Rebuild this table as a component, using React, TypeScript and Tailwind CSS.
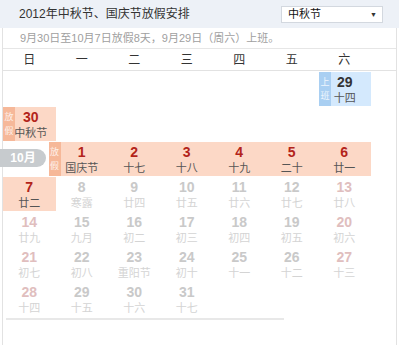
import React from 'react';

type Day = {
    n: string;
    l: string;
    kind?: 'holiday' | 'work' | 'weekend' | 'plain';
};

const FONT = { fontFamily: '"Liberation Sans", "Noto Sans CJK SC", sans-serif' };

const WEEK = ['日', '一', '二', '三', '四', '五', '六'];

// October rows after the holiday block, Sunday first
const OCT_ROWS: Day[][] = [
    [
        { n: '7', l: '廿二', kind: 'holiday' },
        { n: '8', l: '寒露' },
        { n: '9', l: '廿四' },
        { n: '10', l: '廿五' },
        { n: '11', l: '廿六' },
        { n: '12', l: '廿七' },
        { n: '13', l: '廿八', kind: 'weekend' },
    ],
    [
        { n: '14', l: '廿九', kind: 'weekend' },
        { n: '15', l: '九月' },
        { n: '16', l: '初二' },
        { n: '17', l: '初三' },
        { n: '18', l: '初四' },
        { n: '19', l: '初五' },
        { n: '20', l: '初六', kind: 'weekend' },
    ],
    [
        { n: '21', l: '初七', kind: 'weekend' },
        { n: '22', l: '初八' },
        { n: '23', l: '重阳节' },
        { n: '24', l: '初十' },
        { n: '25', l: '十一' },
        { n: '26', l: '十二' },
        { n: '27', l: '十三', kind: 'weekend' },
    ],
    [
        { n: '28', l: '十四', kind: 'weekend' },
        { n: '29', l: '十五' },
        { n: '30', l: '十六' },
        { n: '31', l: '十七' },
    ],
];

const HOLIDAY_WEEK: Day[] = [
    { n: '1', l: '国庆节' },
    { n: '2', l: '十七' },
    { n: '3', l: '十八' },
    { n: '4', l: '十九' },
    { n: '5', l: '二十' },
    { n: '6', l: '廿一' },
];

function Strip({ text, tone }: { text: string; tone: 'rest' | 'work' }) {
    return (
        <div
            className={`w-[12px] h-full flex flex-col items-center justify-center text-[9px] leading-[14px] text-white/80 ${tone === 'rest' ? 'bg-[#f6b899]' : 'bg-[#a9cff2]'}`}
        >
            {text.split('').map((c, i) => <span key={i}>{c}</span>)}
        </div>
    );
}

function DayText({ day, tone }: { day: Day; tone: 'holiday' | 'work' | 'weekend' | 'plain' }) {
    const numColor = tone === 'holiday' ? 'text-[#b3241a]' : tone === 'work' ? 'text-[#333]' : tone === 'weekend' ? 'text-[#e0bebe]' : 'text-[#c9c9c9]';
    const lunarColor = tone === 'holiday' || tone === 'work' ? 'text-[#555]' : 'text-[#d4d4d4]';
    return (
        <div className="flex flex-col items-center pt-px">
            <span className={`text-[14px] font-bold leading-[18px] ${numColor}`}>{day.n}</span>
            <span className={`text-[11px] leading-[15px] ${lunarColor}`}>{day.l}</span>
        </div>
    );
}

export default function App() {
    return (
        <div className="w-[399px] h-[345px] bg-white overflow-hidden" style={FONT}>
            {/* Title bar */}
            <div className="h-[28px] bg-[#edf1f7] flex items-center">
                <div className="w-[19px] shrink-0" />
                <h1 className="text-[12px] text-[#333] font-normal">2012年中秋节、国庆节放假安排</h1>
                <div className="flex-1" />
                <div className="w-[102px] h-[17px] bg-white border border-[#d3d8df] flex items-center justify-between">
                    <span className="ml-[6px] text-[11px] text-[#111] leading-none">中秋节</span>
                    <span className="mr-[5px] text-[7px] text-[#333] leading-none">▼</span>
                </div>
                <div className="w-[16px] shrink-0" />
            </div>

            <div className="ml-[2px] w-[395px] h-[317px] border-l border-r border-[#e2e2e2]">
                <div className="h-[21px] flex items-center border-b border-[#e6e6e6]">
                    <div className="w-[17px] shrink-0" />
                    <p className="text-[11px] text-[#a0a0a0]">
                        9月30日至10月7日放假8天，9月29日（周六）上班。
                    </p>
                </div>

                <div className="grid grid-cols-[repeat(7,52.5px)] h-[22px] border-b border-[#e2e2e2]">
                    {WEEK.map(w => (
                        <div key={w} className="flex items-center justify-center text-[12px] text-[#333]">{w}</div>
                    ))}
                </div>

                {/* Sept 29 - working Saturday */}
                <div className="grid grid-cols-[repeat(7,52.5px)] h-[35px] pt-px">
                    <div className="col-start-7 h-[34px] ml-px bg-[#d4e9fd] relative">
                        <div className="absolute left-0 top-0 h-full"><Strip text="上班" tone="work" /></div>
                        <DayText day={{ n: '29', l: '十四' }} tone="work" />
                    </div>
                </div>

                {/* Sept 30 - Mid-Autumn */}
                <div className="grid grid-cols-[repeat(7,52.5px)] h-[35px] pt-px">
                    <div className="h-[34px] bg-[#fcd8c6] relative">
                        <div className="absolute left-0 top-0 h-full"><Strip text="放假" tone="rest" /></div>
                        <div className="ml-[3px]"><DayText day={{ n: '30', l: '中秋节' }} tone="holiday" /></div>
                    </div>
                </div>

                {/* Oct 1-6 */}
                <div className="grid grid-cols-[repeat(7,52.5px)] h-[35px] pt-px">
                    <div className="flex items-center -ml-[3px] pb-[2px]">
                        <div className="w-[46px] h-[18px] rounded-r-full bg-[#c7cbce] flex items-center justify-center text-[12px] font-bold text-white">10月</div>
                    </div>
                    <div className="col-span-6 h-[34px] bg-[#fcd8c6] relative grid grid-cols-[repeat(6,52.5px)]">
                        <div className="absolute -left-[7px] top-0 h-full"><Strip text="放假" tone="rest" /></div>
                        {HOLIDAY_WEEK.map(d => <DayText key={d.n} day={d} tone="holiday" />)}
                    </div>
                </div>

                {OCT_ROWS.map((row, r) => (
                    <div key={r} className="grid grid-cols-[repeat(7,52.5px)] h-[35px] pt-px">
                        {row.map(d => (
                            <div key={d.n} className={`h-[34px] ${d.kind === 'holiday' ? 'bg-[#fcd8c6]' : ''}`}>
                                <DayText day={d} tone={d.kind ?? 'plain'} />
                            </div>
                        ))}
                    </div>
                ))}

                <div className="mt-[2px] ml-[3px] w-[278px] h-[2px] bg-[#e8e8e8]" />
            </div>
        </div>
    );
}
